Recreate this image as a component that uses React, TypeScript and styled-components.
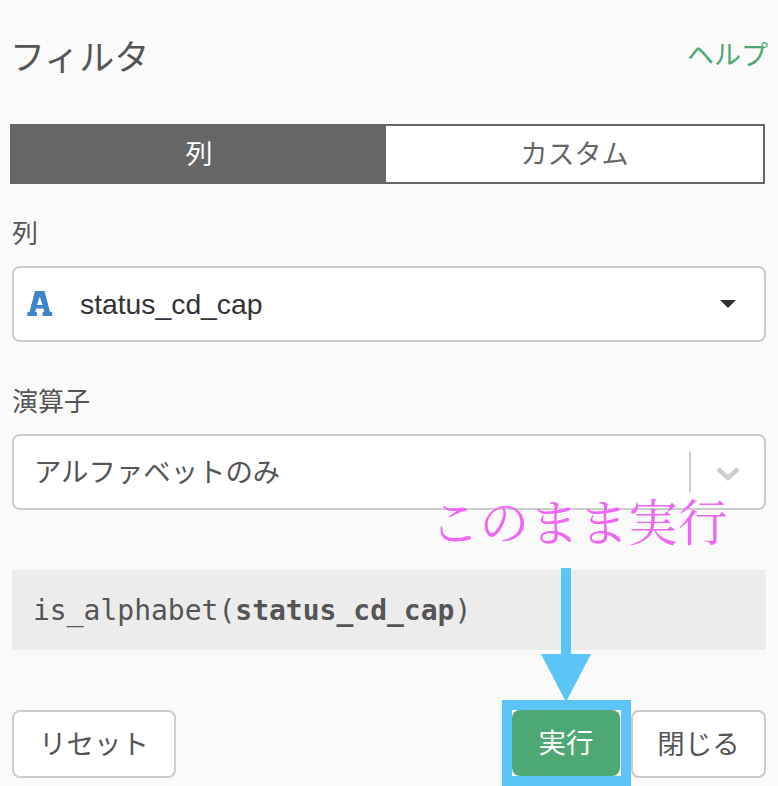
import React from 'react';
import styled, { createGlobalStyle } from 'styled-components';

const JP = '"Liberation Sans", "Noto Sans CJK JP", sans-serif';

const GlobalStyle = createGlobalStyle`
  html, body {
    margin: 0;
    padding: 0;
    background: #fafafa;
  }
`;

const TypeIcon = () => (
  <svg width="26" height="27" viewBox="0 0 26 27">
    <path
      fill="#3b86c8"
      fillRule="evenodd"
      d="M8 1h9.5L23 22h2.2v4H15.6v-4h1.6l-.8-3.4H9.1L8.3 22h1.6v4H.3v-4h2.2L8 1zM12.75 6.8L10 15h5.5L12.75 6.8z"
    />
  </svg>
);

const App: React.FC = () => {
  return (
    <Page>
      <GlobalStyle />
      <Header>
        <Title>フィルタ</Title>
        <HelpLink href="#">ヘルプ</HelpLink>
      </Header>

      <Tabs>
        <Tab $active>列</Tab>
        <Tab>カスタム</Tab>
      </Tabs>

      <Label>列</Label>
      <SelectBox>
        <IconSlot><TypeIcon /></IconSlot>
        <ColumnName>status_cd_cap</ColumnName>
        <Caret />
      </SelectBox>

      <Label $top={42}>演算子</Label>
      <SelectBox>
        <OperatorName>アルファベットのみ</OperatorName>
        <Separator />
        <Chevron viewBox="0 0 24 14" width="24" height="14">
          <path d="M2 2l10 9 10-9" fill="none" stroke="#cccccc" strokeWidth="4.5" />
        </Chevron>
      </SelectBox>

      <Note>このまま実行</Note>

      <CodeBlock>
        is_alphabet(<b>status_cd_cap</b>)
      </CodeBlock>

      <Footer>
        <Button>リセット</Button>
        <Actions>
          <Highlight>
            <RunSlot>
              <RunButton>実行</RunButton>
            </RunSlot>
          </Highlight>
          <Button $width={135}>閉じる</Button>
        </Actions>
      </Footer>

      <Arrow viewBox="0 0 50 132" width="50" height="132">
        <rect x="20" y="0" width="10" height="87" fill="#5bc5f7" />
        <path d="M0 86h50L25 134z" fill="#5bc5f7" />
      </Arrow>
    </Page>
  );
};

export default App;

// Styled components

const Page = styled.div`
  position: relative;
  box-sizing: border-box;
  width: 778px;
  height: 786px;
  padding: 0 12px;
  overflow: hidden;
  background: #fafafa;
  font-family: ${JP};
  color: #555555;
`;

const Header = styled.div`
  display: flex;
  justify-content: space-between;
  align-items: flex-start;
  height: 124px;
  box-sizing: border-box;
`;

const Title = styled.h1`
  margin: 36px 0 0 -2px;
  font-size: 35px;
  line-height: 44px;
  font-weight: 400;
  color: #555555;
`;

const HelpLink = styled.a`
  margin: 38px -2px 0 0;
  font-size: 27px;
  line-height: 36px;
  color: #4ea873;
  text-decoration: none;
`;

const Tabs = styled.div`
  display: flex;
  box-sizing: border-box;
  width: 755px;
  height: 60px;
  margin-left: -2px;
  border: 2px solid #666666;
`;

const Tab = styled.div<{ $active?: boolean }>`
  display: flex;
  align-items: center;
  justify-content: center;
  flex: ${props => (props.$active ? '0 0 374px' : '1')};
  padding-bottom: 4px;
  font-size: 27px;
  background: ${props => (props.$active ? '#666666' : '#ffffff')};
  color: ${props => (props.$active ? '#ffffff' : '#666666')};
`;

const Label = styled.div<{ $top?: number }>`
  margin-top: ${props => props.$top ?? 32}px;
  margin-bottom: 14px;
  font-size: 26px;
  line-height: 36px;
  color: #555555;
`;

const SelectBox = styled.div`
  display: flex;
  align-items: center;
  box-sizing: border-box;
  width: 754px;
  height: 76px;
  background: #ffffff;
  border: 2px solid #cccccc;
  border-radius: 8px;
`;

const IconSlot = styled.span`
  display: flex;
  margin-left: 13px;
  margin-top: -2px;
`;

const ColumnName = styled.span`
  flex: 1;
  margin-left: 27px;
  font-size: 28.3px;
  color: #333333;
`;

const Caret = styled.span`
  width: 0;
  height: 0;
  margin-right: 28px;
  border-left: 8px solid transparent;
  border-right: 8px solid transparent;
  border-top: 8px solid #333333;
`;

const OperatorName = styled.span`
  flex: 1;
  margin-left: 20px;
  padding-bottom: 4px;
  font-size: 27.4px;
  color: #555555;
`;

const Separator = styled.span`
  width: 2px;
  height: 40px;
  background: #cccccc;
`;

const Chevron = styled.svg`
  margin: 4px 24px 0 25px;
`;

const Note = styled.div`
  position: absolute;
  left: 430px;
  top: 495px;
  font-family: "Liberation Serif", "Noto Serif CJK JP", "Noto Sans CJK JP", serif;
  font-size: 49.6px;
  line-height: 60px;
  white-space: nowrap;
  color: #ee66f5;
`;

const CodeBlock = styled.div`
  display: flex;
  align-items: center;
  box-sizing: border-box;
  width: 754px;
  height: 80px;
  margin-top: 60px;
  padding-left: 21px;
  background: #ececec;
  font-family: "DejaVu Sans Mono", monospace;
  font-size: 28px;
  white-space: pre;
  color: #555555;
`;

const Footer = styled.div`
  display: flex;
  justify-content: space-between;
  align-items: flex-start;
  width: 754px;
  margin-top: 60px;
`;

const Actions = styled.div`
  display: flex;
  align-items: flex-start;
`;

const Button = styled.button<{ $width?: number }>`
  box-sizing: border-box;
  width: ${props => props.$width ?? 164}px;
  height: 68px;
  padding: 0 0 4px;
  background: #ffffff;
  border: 2px solid #cccccc;
  border-radius: 8px;
  font-family: ${JP};
  font-size: 27.5px;
  color: #555555;
`;

const Highlight = styled.div`
  display: flex;
  margin-top: -10px;
  padding: 10px;
  background: #5bc5f7;
`;

const RunSlot = styled.div`
  display: flex;
  background: #ffffff;
`;

const RunButton = styled.button`
  box-sizing: border-box;
  width: 108px;
  height: 66px;
  margin-right: 1px;
  padding: 0 0 4px;
  background: #4ea873;
  border: none;
  border-radius: 8px;
  outline: 0;
  font-family: ${JP};
  font-size: 27.5px;
  color: #ffffff;
`;

const Arrow = styled.svg`
  position: absolute;
  left: 541px;
  top: 568px;
`;
